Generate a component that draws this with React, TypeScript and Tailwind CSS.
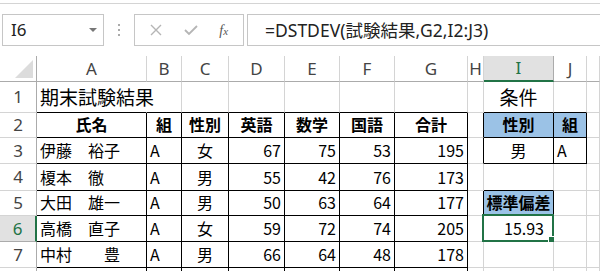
import React from "react";

const COLS = ["A", "B", "C", "D", "E", "F", "G", "H", "I", "J", ""];

type Cell = {
  t: string;
  align?: "l" | "c" | "r";
  bold?: boolean;
  big?: boolean;
  fill?: boolean;
};

const data: Record<string, Cell> = {
  "1-1": { t: "期末試験結果", align: "l", big: true },
  "1-9": { t: "条件", align: "c", big: true },
  "2-1": { t: "氏名", align: "c", bold: true },
  "2-2": { t: "組", align: "c", bold: true },
  "2-3": { t: "性別", align: "c", bold: true },
  "2-4": { t: "英語", align: "c", bold: true },
  "2-5": { t: "数学", align: "c", bold: true },
  "2-6": { t: "国語", align: "c", bold: true },
  "2-7": { t: "合計", align: "c", bold: true },
  "2-9": { t: "性別", align: "c", bold: true, fill: true },
  "2-10": { t: "組", align: "c", bold: true, fill: true },
  "3-9": { t: "男", align: "c" },
  "3-10": { t: "A", align: "l" },
  "5-9": { t: "標準偏差", align: "c", bold: true, fill: true },
  "6-9": { t: "15.93", align: "r" },
};

const people: [string, string, number, number, number, number][] = [
  ["伊藤　裕子", "女", 67, 75, 53, 195],
  ["榎本　徹", "男", 55, 42, 76, 173],
  ["大田　雄一", "男", 50, 63, 64, 177],
  ["高橋　直子", "女", 59, 72, 74, 205],
  ["中村　　豊", "男", 66, 64, 48, 178],
];
people.forEach((p, i) => {
  const r = i + 3;
  data[`${r}-1`] = { t: p[0], align: "l" };
  data[`${r}-2`] = { t: "A", align: "l" };
  data[`${r}-3`] = { t: p[1], align: "c" };
  data[`${r}-4`] = { t: String(p[2]), align: "r" };
  data[`${r}-5`] = { t: String(p[3]), align: "r" };
  data[`${r}-6`] = { t: String(p[4]), align: "r" };
  data[`${r}-7`] = { t: String(p[5]), align: "r" };
});

const isBox = (r: number, c: number) =>
  (r >= 2 && r <= 8 && c >= 1 && c <= 7) ||
  (r >= 2 && r <= 3 && c >= 9 && c <= 10) ||
  (r === 5 && c === 9);

const ROWS = [1, 2, 3, 4, 5, 6, 7, 8];

function DataCell({ r, c }: { r: number; c: number }) {
  const cell = data[`${r}-${c}`];
  // title text spills over into B1, so no gridline there
  const spill = r === 1 && c === 1;
  const selected = r === 6 && c === 9;
  const right = spill
    ? "border-r-white"
    : isBox(r, c) || isBox(r, c + 1)
    ? "border-r-black"
    : "border-r-[#d4d4d4]";
  const bottom = isBox(r, c) || isBox(r + 1, c) ? "border-b-black" : "border-b-[#d4d4d4]";
  const align =
    cell?.align === "c"
      ? "justify-center"
      : cell?.align === "r"
      ? selected
        ? "justify-end pr-[9px]"
        : "justify-end pr-[3px]"
      : "justify-start pl-[3px]";
  return (
    <div
      className={`relative flex items-end pb-[1px] border-r border-b whitespace-nowrap ${right} ${bottom} ${align} ${
        cell?.fill ? "bg-[#9bc2e6]" : "bg-white"
      } ${cell?.big ? "text-[19px]" : "text-[16px]"} ${cell?.bold ? "font-bold" : ""} ${
        spill ? "z-10" : ""
      } ${c === 11 ? "overflow-hidden" : ""}`}
    >
      {cell?.t}
      {selected && (
        <div className="absolute -left-[2px] -top-[2px] -right-[1px] -bottom-[1px] border-2 border-[#217346]">
          <div className="absolute -right-[4px] -bottom-[4px] w-[6px] h-[6px] bg-[#217346] border border-white box-content" />
        </div>
      )}
    </div>
  );
}

export default function App() {
  return (
    <div className="w-[600px] h-[271px] overflow-hidden bg-white text-black" style={{ fontFamily: '"Noto Sans CJK JP", sans-serif' }}>
      {/* top strip */}
      <div className="h-[4px] border-b border-[#d4d4d4]" />

      {/* formula bar */}
      <div className="h-[52px] flex items-start pt-[10px]" style={{ fontFamily: '"Noto Sans", "Noto Sans CJK JP", sans-serif' }}>
        <div className="ml-[2px] w-[102px] h-[32px] border border-[#c6c6c6] flex items-center justify-between pl-[8px] pr-[6px]">
          <span className="text-[17px] text-[#222]">I6</span>
          <span className="w-0 h-0 border-l-[4px] border-r-[4px] border-t-[4px] border-l-transparent border-r-transparent border-t-[#777]" />
        </div>
        <div className="w-[30px] h-[32px] flex flex-col items-center justify-center gap-[3px]">
          <span className="w-[2px] h-[2px] bg-[#aaa]" />
          <span className="w-[2px] h-[2px] bg-[#aaa]" />
          <span className="w-[2px] h-[2px] bg-[#aaa]" />
        </div>
        <div className="w-[110px] h-[32px] border border-[#c6c6c6] flex items-center justify-around px-[4px]">
          <svg width="12" height="12" viewBox="0 0 12 12">
            <path d="M1 1L11 11M11 1L1 11" stroke="#b5b5b5" strokeWidth="1.4" />
          </svg>
          <svg width="14" height="12" viewBox="0 0 14 12">
            <path d="M1 6L5 10L13 2" stroke="#b5b5b5" strokeWidth="1.8" fill="none" />
          </svg>
          <span className="text-[14px] italic text-[#555]" style={{ fontFamily: '"Liberation Serif", serif' }}>
            f<span className="text-[11px]">x</span>
          </span>
        </div>
        <div className="ml-[3px] flex-1 h-[32px] border border-r-0 border-[#c6c6c6] flex items-center pl-[17px] text-[17.5px] text-[#222]">
          =DSTDEV(試験結果,G2,I2:J3)
        </div>
      </div>

      {/* sheet */}
      <div className="grid grid-cols-[37px_110px_35px_47px_56px_55px_55px_73px_16px_70px_33px_13px] grid-rows-[26px_31px_25px_26px_27px_25px_26px_26px_10px]">
        {/* corner */}
        <div className="relative border-r border-b border-[#ababab] bg-white">
          <svg className="absolute right-[3px] bottom-[3px]" width="18" height="18" viewBox="0 0 18 18">
            <polygon points="18,0 18,18 0,18" fill="#dcdcdc" />
          </svg>
        </div>
        {COLS.map((h, i) => (
          <div
            key={i}
            className={`flex items-center justify-center text-[17px] border-r ${
              h === "I"
                ? "bg-[#e1e1e1] text-[#217346] border-b-2 border-b-[#217346] border-r-[#ababab]"
                : "bg-white text-[#444] border-b border-b-[#ababab] border-r-[#d4d4d4]"
            }`}
            style={{ fontFamily: '"Noto Sans", sans-serif' }}
          >
            {h}
          </div>
        ))}

        {ROWS.map((r) => (
          <React.Fragment key={r}>
            <div
              className={`flex items-center justify-center text-[17px] border-b ${
                r === 6
                  ? "bg-[#e1e1e1] text-[#217346] border-r-2 border-r-[#217346] border-b-[#ababab]"
                  : "bg-white text-[#444] border-r border-r-[#ababab] border-b-[#d4d4d4]"
              }`}
              style={{ fontFamily: '"Noto Sans", sans-serif' }}
            >
              {r < 8 ? r : ""}
            </div>
            {COLS.map((_, i) => (
              <DataCell key={i} r={r} c={i + 1} />
            ))}
          </React.Fragment>
        ))}
      </div>
    </div>
  );
}
